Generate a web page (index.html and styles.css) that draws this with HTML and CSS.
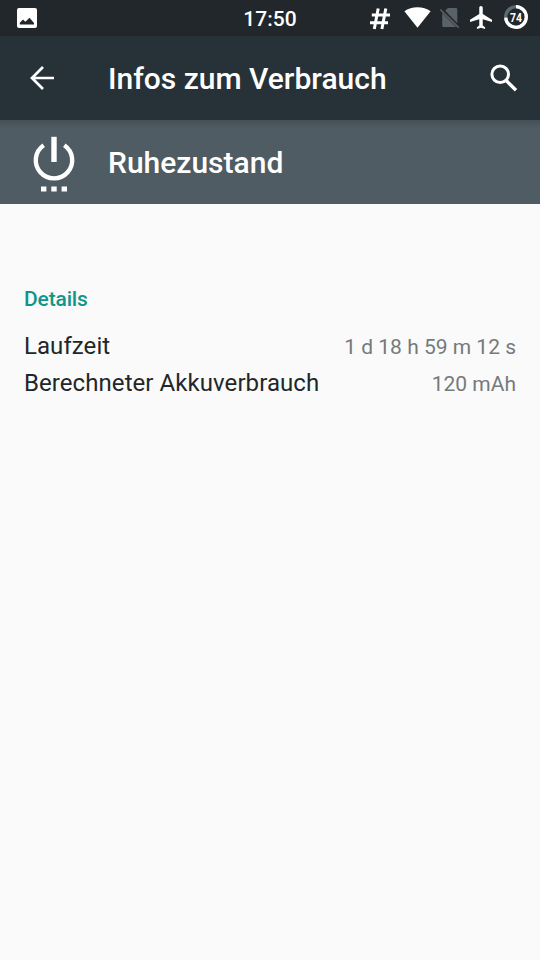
FILE: index.html
```html
<!DOCTYPE html>
<html lang="de">
<head>
  <meta charset="UTF-8">
  <meta name="viewport" content="width=device-width, initial-scale=1.0">
  <title>Infos zum Verbrauch</title>
  <link rel="stylesheet" href="styles.css">
</head>
<body>
  <div class="status-bar">
    <div class="status-left">
      <svg width="20" height="20" viewBox="0 0 20 20">
        <rect width="20" height="20" rx="2" fill="#fff"/>
        <path d="M2.800 16.500 V14.800 L6 11.500 L8.400 13.800 L12.500 9.800 L17 15 V16.500 Z" fill="#21272b"/>
      </svg>
    </div>
    <div class="clock">17:50</div>
    <div class="status-right">
      <!-- notification hash -->
      <svg class="icon-hash" width="20" height="22" viewBox="0 0 20 22">
        <path d="M8.200 .5 L4.300 21 M15.800 .5 L11.900 21 M1.800 7 H20 M0 14.700 H18" fill="none" stroke="#fff" stroke-width="3"/>
      </svg>
      <!-- wifi -->
      <svg class="icon-wifi" width="27" height="21" viewBox="0 0 27 21">
        <path d="M.4 4.200 Q6 .2 13.500 .2 T26.600 4.200 L13.500 20.800 Z" fill="#fff"/>
      </svg>
      <!-- no sim -->
      <svg class="icon-sim" width="20" height="21" viewBox="0 0 20 21">
        <path d="M7.800 1 H16 Q17.300 1 17.300 2.300 V16.200 L5.200 3.800 Z M2.200 6 L16.200 20 H3.500 Q2.200 20 2.200 18.700 Z" fill="#596266"/>
        <path d="M.3 2.500 L18.700 20.600" stroke="#596266" stroke-width="1.600"/>
      </svg>
      <!-- airplane mode -->
      <svg class="icon-plane" width="22" height="23" viewBox="2 2 19 20" preserveAspectRatio="none">
        <path d="M21 16v-2l-8-5V3.500c0-.83-.67-1.500-1.500-1.500S10 2.670 10 3.500V9l-8 5v2l8-2.500V19l-2 1.500V22l3.500-1 3.500 1v-1.500L13 19v-5.500l8 2.500z" fill="#fff"/>
      </svg>
      <!-- battery -->
      <svg class="icon-battery" width="24" height="24" viewBox="0 0 24 24">
        <circle cx="12" cy="12" r="10.300" fill="none" stroke="#61686b" stroke-width="3.300"/>
        <circle cx="12" cy="12" r="10.300" fill="none" stroke="#fff" stroke-width="3.300" pathLength="100" stroke-dasharray="74 26" transform="rotate(-90 12 12)"/>
        <text class="battery-text" x="12" y="16.500" text-anchor="middle" textLength="12" lengthAdjust="spacingAndGlyphs">74</text>
      </svg>
    </div>
  </div>

  <div class="toolbar">
    <svg class="back" width="24" height="24" viewBox="0 0 24 24">
      <path d="M24 12 H2 M13 1 L2 12 L13 23" fill="none" stroke="#fff" stroke-width="2.700"/>
    </svg>
    <h1 class="title">Infos zum Verbrauch</h1>
    <svg class="search" width="28" height="28" viewBox="0 0 28 28">
      <circle cx="10.200" cy="10.300" r="8.300" fill="none" stroke="#fff" stroke-width="3"/>
      <path d="M16.500 16.800 L26 26.300" stroke="#fff" stroke-width="3.400"/>
    </svg>
  </div>

  <div class="header">
    <svg class="power" width="44" height="58" viewBox="0 0 44 58">
      <path d="M11.700 12.200 A18.200 18.200 0 1 0 32.300 12.200" fill="none" stroke="#fff" stroke-width="4.400"/>
      <path d="M22 3.800 V29" stroke="#fff" stroke-width="5.400"/>
      <path d="M9 53.500 h5.400 v5 h-5.400 z M19.300 53.500 h5.400 v5 h-5.400 z M29.600 53.500 h5.400 v5 h-5.400 z" fill="#fff"/>
    </svg>
    <h2 class="title">Ruhezustand</h2>
  </div>

  <div class="details">
    <h3 class="category">Details</h3>
    <div class="row">
      <span class="label">Laufzeit</span>
      <span class="value">1 d 18 h 59 m 12 s</span>
    </div>
    <div class="row">
      <span class="label">Berechneter Akkuverbrauch</span>
      <span class="value">120 mAh</span>
    </div>
  </div>
</body>
</html>
```

FILE: styles.css
```css
body {
  margin: 0;
  min-height: 100vh;
  background-color: #fafafa;
  color: #212729;
  font-family: Roboto, sans-serif;
}

svg {
  display: block;
  flex: none;
  overflow: visible;
}

/* Status bar */
.status-bar {
  display: grid;
  grid-template-columns: 1fr auto 1fr;
  height: 36px;
  background-color: #21272b;
  color: #fff;
}

.status-left {
  padding: 8px 0 0 17px;
}

.clock {
  font-size: 21px;
  font-weight: 500;
  line-height: 38px;
}

.status-right {
  display: flex;
  justify-content: flex-end;
  align-items: flex-start;
  padding-right: 12px;
}

.icon-hash {
  margin: 8px 14px 0 0;
}

.icon-wifi {
  margin: 7px 9px 0 0;
}

.icon-sim {
  margin: 7px 10px 0 0;
}

.icon-plane {
  margin: 6px 12px 0 0;
}

.icon-battery {
  margin-top: 5px;
}

.battery-text {
  fill: #fff;
  font-size: 12px;
  font-weight: 700;
}

/* App bar */
.toolbar {
  display: flex;
  align-items: center;
  height: 84px;
  padding: 0 22px 0 30px;
  background-color: #273238;
}

.title {
  flex: 1;
  margin: 0;
  padding-top: 2px;
  color: #fff;
  font-size: 30px;
  font-weight: 500;
  line-height: 36px;
}

.back {
  margin-right: 54px;
}

/* App header, shaded by the bar above it */
.header {
  display: flex;
  align-items: center;
  height: 84px;
  padding-left: 32px;
  background: linear-gradient(#435057, #4f5c63 8px);
}

.power {
  margin-right: 32px;
}

/* Details list */
.details {
  padding: 82px 24px 0;
}

.category {
  margin: 0 0 16px;
  color: #109688;
  font-size: 21px;
  font-weight: 500;
  letter-spacing: -0.15px;
  line-height: 26px;
}

.row {
  display: flex;
  justify-content: space-between;
  align-items: baseline;
  height: 37px;
  line-height: 36px;
}

.label {
  font-size: 24px;
  letter-spacing: 0.07px;
}

.value {
  color: #757a7b;
  font-size: 21px;
}
```
